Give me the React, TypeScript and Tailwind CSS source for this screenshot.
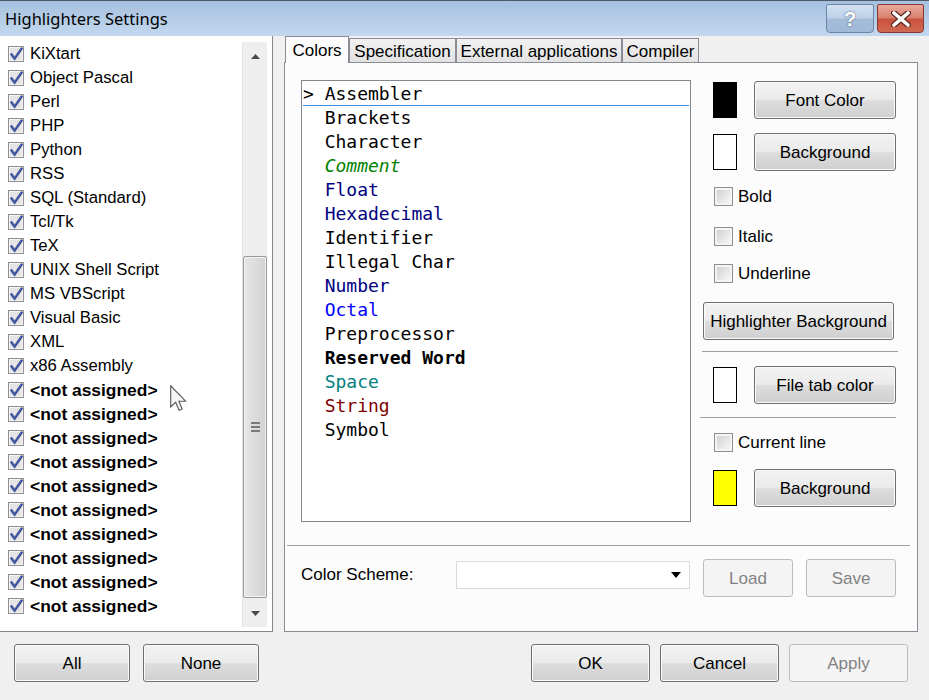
import React from "react";

const LANGS = [
  "KiXtart",
  "Object Pascal",
  "Perl",
  "PHP",
  "Python",
  "RSS",
  "SQL (Standard)",
  "Tcl/Tk",
  "TeX",
  "UNIX Shell Script",
  "MS VBScript",
  "Visual Basic",
  "XML",
  "x86 Assembly",
];

const ATTRS: { name: string; cls: string }[] = [
  { name: "Assembler", cls: "text-black" },
  { name: "Brackets", cls: "text-black" },
  { name: "Character", cls: "text-black" },
  { name: "Comment", cls: "text-[#008000] italic" },
  { name: "Float", cls: "text-[#000080]" },
  { name: "Hexadecimal", cls: "text-[#000080]" },
  { name: "Identifier", cls: "text-black" },
  { name: "Illegal Char", cls: "text-black" },
  { name: "Number", cls: "text-[#000080]" },
  { name: "Octal", cls: "text-[#0000ff]" },
  { name: "Preprocessor", cls: "text-black" },
  { name: "Reserved Word", cls: "text-black font-bold" },
  { name: "Space", cls: "text-[#008080]" },
  { name: "String", cls: "text-[#800000]" },
  { name: "Symbol", cls: "text-black" },
];

const WinButton = ({
  children,
  className = "",
  disabled = false,
}: {
  children: React.ReactNode;
  className?: string;
  disabled?: boolean;
}) => (
  <button
    type="button"
    className={`flex shrink-0 items-center justify-center rounded-[3px] border text-[17px] leading-none ${
      disabled
        ? "border-[#bcbcbc] bg-[#f4f4f4] text-[#838383]"
        : "border-[#707070] bg-[linear-gradient(to_bottom,#f2f2f2_0%,#ebebeb_48%,#dddddd_52%,#cfcfcf_100%)] text-black shadow-[inset_0_0_0_1px_#fafafa]"
    } ${className}`}
  >
    {children}
  </button>
);

const CheckedBox = () => (
  <svg width="16" height="16" viewBox="0 0 16 16" className="shrink-0">
    <rect x="0.5" y="0.5" width="15" height="15" fill="#f6f6f6" stroke="#8f8f8f" />
    <rect x="2" y="2" width="12" height="12" fill="#e4e4e4" />
    <path d="M2.8 7.4 L6.6 12.6 L14.2 1.8" fill="none" stroke="#4257a1" strokeWidth="2.5" />
  </svg>
);

const EmptyBox = () => (
  <div className="h-[19px] w-[19px] shrink-0 border border-[#8f8f8f] bg-[#f4f4f4] p-[2px]">
    <div className="h-full w-full bg-linear-to-br from-[#d2d2d2] to-[#f6f6f6]" />
  </div>
);

const Swatch = ({ color }: { color: string }) => (
  <div className={`h-[36px] w-[24px] shrink-0 border border-black ${color}`} />
);

const Arrow = ({ down = false }: { down?: boolean }) => (
  <svg width="9" height="5" viewBox="0 0 9 5">
    <polygon points={down ? "0,0 9,0 4.5,5" : "0,5 9,5 4.5,0"} fill="#4a4a4a" />
  </svg>
);

const Cursor = () => (
  <svg width="17" height="27" viewBox="0 0 12 19" className="absolute left-[170px] top-[385px]">
    <path
      d="M0.5 0.5 L0.5 15.5 L4 12.2 L6.4 17.8 L8.6 16.9 L6.3 11.4 L11 11.4 Z"
      fill="#f6f6f6"
      stroke="#5a5a5a"
      strokeWidth="0.8"
    />
  </svg>
);

export default function App() {
  return (
    <div className="relative flex h-[700px] w-[929px] flex-col overflow-hidden bg-[#f0f0f0] font-['Liberation_Sans',Arial,sans-serif] text-black">
      {/* title bar */}
      <div className="flex h-[36px] shrink-0 border-t border-[#4d5b6c] bg-linear-to-b from-[#a6c0de] to-[#c3d8ef]">
        <div className="pl-[5px] pt-[8px] font-['Noto_Sans',sans-serif] text-[16.5px] leading-[20px] text-black">
          Highlighters Settings
        </div>
        <div className="ml-auto mr-[5px] mt-[3px] flex h-[29px] gap-[3px]">
          <div className="flex w-[48px] items-center justify-center rounded-b-[4px] rounded-t-[2px] border border-[#6b85a6] bg-[linear-gradient(to_bottom,#d3e2f3_0%,#bdd1e9_48%,#a4bcd9_52%,#9fb9d8_100%)] text-[20px] font-bold text-white [text-shadow:0_0_2px_#34475e]">
            ?
          </div>
          <div className="flex w-[47px] items-center justify-center rounded-b-[4px] rounded-t-[2px] border border-[#8a372e] bg-[linear-gradient(to_bottom,#e9a99c_0%,#d9806f_48%,#c8503e_52%,#d06a52_100%)]">
            <svg width="20" height="16" viewBox="0 0 20 16">
              <path d="M3 2 L17 14 M17 2 L3 14" stroke="#5b2a24" strokeWidth="6" strokeLinecap="round" />
              <path d="M3 2 L17 14 M17 2 L3 14" stroke="#ffffff" strokeWidth="3.6" strokeLinecap="round" />
            </svg>
          </div>
        </div>
      </div>

      {/* main area */}
      <div className="flex h-[596px] shrink-0">
        {/* highlighter list */}
        <div className="flex w-[273px] shrink-0 border-b border-r border-[#828790] bg-white">
          <div className="flex-1 pt-[6px]">
            {LANGS.map((l) => (
              <div key={l} className="flex h-[24px] items-center gap-[6px] pl-[8px] text-[16.7px]">
                <CheckedBox />
                <span>{l}</span>
              </div>
            ))}
            {Array.from({ length: 10 }).map((_, i) => (
              <div key={i} className="flex h-[24px] items-center gap-[6px] pl-[8px] text-[17.4px] font-bold">
                <CheckedBox />
                <span>&lt;not assigned&gt;</span>
              </div>
            ))}
          </div>
          <div className="mb-[4px] mr-[5px] mt-[6px] flex w-[25px] flex-col border-l border-[#e2e2e2] bg-[#eeeeee]">
            <div className="flex h-[28px] items-center justify-center">
              <Arrow />
            </div>
            <div className="h-[186px]" />
            <div className="flex h-[342px] w-[24px] items-center justify-center rounded-[2px] border border-[#9a9a9a] bg-linear-to-r from-[#e6e6e6] to-[#d2d2d2] shadow-[inset_0_0_0_1px_#f2f2f2]">
              <div className="flex w-[9px] flex-col gap-[2px]">
                <div className="h-[2px] border-y border-[#7a7a7a] bg-[#f6f6f6]" />
                <div className="h-[2px] border-y border-[#7a7a7a] bg-[#f6f6f6]" />
                <div className="h-[2px] border-y border-[#7a7a7a] bg-[#f6f6f6]" />
              </div>
            </div>
            <div className="h-[1px]" />
            <div className="flex h-[28px] items-center justify-center">
              <Arrow down />
            </div>
          </div>
        </div>

        {/* tab control */}
        <div className="ml-[11px] flex w-[634px] shrink-0 flex-col">
          <div className="flex h-[26px] items-end pl-px text-[17px]">
            <div className="relative z-10 -mb-px flex h-[27px] w-[64px] justify-center border border-b-0 border-[#898c95] bg-[#fcfcfc] pt-[4px] leading-[20px]">
              Colors
            </div>
            <div className="flex h-[24px] w-[107px] justify-center border border-b-0 border-[#898c95] bg-linear-to-b from-[#f2f2f2] to-[#e2e2e2] pt-[3px] leading-[20px]">
              Specification
            </div>
            <div className="flex h-[24px] w-[166px] justify-center border border-b-0 border-[#898c95] bg-linear-to-b from-[#f2f2f2] to-[#e2e2e2] pt-[3px] leading-[20px]">
              External applications
            </div>
            <div className="flex h-[24px] w-[77px] justify-center border border-b-0 border-[#898c95] bg-linear-to-b from-[#f2f2f2] to-[#e2e2e2] pt-[3px] leading-[20px]">
              Compiler
            </div>
          </div>

          <div className="flex h-[570px] flex-col border border-[#898c95] bg-[#fcfcfc]">
            <div className="flex h-[482px] pl-[16px] pt-[17px]">
              {/* attribute list */}
              <div className="h-[442px] w-[390px] shrink-0 border border-[#828790] bg-white px-px pt-px font-['DejaVu_Sans_Mono',monospace] text-[18px]">
                {ATTRS.map((a, i) => (
                  <div
                    key={a.name}
                    className={`flex h-[24px] items-center whitespace-pre leading-none ${a.cls} ${
                      i === 0 ? "border-b border-[#3e8ede]" : ""
                    }`}
                  >
                    <span className="font-normal not-italic text-black">{i === 0 ? "> " : "  "}</span>
                    {a.name}
                  </div>
                ))}
              </div>

              {/* colour controls */}
              <div className="ml-[9px] flex w-[198px] flex-col pt-[1px] text-[17px]">
                <div className="flex h-[38px] items-center gap-[17px] pl-[13px]">
                  <Swatch color="bg-black" />
                  <WinButton className="h-[38px] w-[142px]">Font Color</WinButton>
                </div>
                <div className="mt-[14px] flex h-[38px] items-center gap-[17px] pl-[13px]">
                  <Swatch color="bg-white" />
                  <WinButton className="h-[38px] w-[142px]">Background</WinButton>
                </div>
                <div className="mt-[16px] flex h-[19px] items-center gap-[5px] pl-[14px]">
                  <EmptyBox />
                  <span>Bold</span>
                </div>
                <div className="mt-[21px] flex h-[19px] items-center gap-[5px] pl-[14px]">
                  <EmptyBox />
                  <span>Italic</span>
                </div>
                <div className="mt-[18px] flex h-[19px] items-center gap-[5px] pl-[14px]">
                  <EmptyBox />
                  <span>Underline</span>
                </div>
                <WinButton className="ml-[3px] mt-[19px] h-[38px] w-[191px]">Highlighter Background</WinButton>
                <div className="ml-[2px] mt-[11px] w-[196px] border-t border-[#a0a0a0]" />
                <div className="mt-[14px] flex h-[38px] items-center gap-[17px] pl-[13px]">
                  <Swatch color="bg-white" />
                  <WinButton className="h-[38px] w-[142px]">File tab color</WinButton>
                </div>
                <div className="mt-[13px] w-[196px] border-t border-[#a0a0a0]" />
                <div className="mt-[15px] flex h-[19px] items-center gap-[5px] pl-[14px]">
                  <EmptyBox />
                  <span>Current line</span>
                </div>
                <div className="mt-[17px] flex h-[38px] items-center gap-[17px] pl-[13px]">
                  <Swatch color="bg-[#ffff00]" />
                  <WinButton className="h-[38px] w-[142px]">Background</WinButton>
                </div>
              </div>
            </div>

            <div className="ml-[2px] w-[623px] border-t border-[#a0a0a0]" />

            <div className="mt-[13px] flex h-[38px] pl-[16px] text-[17px]">
              <div className="mt-[2px] flex h-[28px] w-[155px] items-center">Color Scheme:</div>
              <div className="mt-[2px] flex h-[28px] w-[234px] items-center justify-end border border-[#d9d9d9] bg-white pr-[8px]">
                <svg width="10" height="6" viewBox="0 0 10 6">
                  <polygon points="0,0 10,0 5,6" fill="#000" />
                </svg>
              </div>
              <WinButton disabled className="ml-[13px] h-[38px] w-[90px]">
                Load
              </WinButton>
              <WinButton disabled className="ml-[13px] h-[38px] w-[90px]">
                Save
              </WinButton>
            </div>
          </div>
        </div>
      </div>

      {/* dialog buttons */}
      <div className="mt-[12px] flex h-[38px] shrink-0">
        <WinButton className="ml-[14px] h-[38px] w-[116px]">All</WinButton>
        <WinButton className="ml-[13px] h-[38px] w-[116px]">None</WinButton>
        <WinButton className="ml-[272px] h-[38px] w-[119px]">OK</WinButton>
        <WinButton className="ml-[10px] h-[38px] w-[119px]">Cancel</WinButton>
        <WinButton disabled className="ml-[10px] h-[38px] w-[119px]">
          Apply
        </WinButton>
      </div>

      <Cursor />
    </div>
  );
}
